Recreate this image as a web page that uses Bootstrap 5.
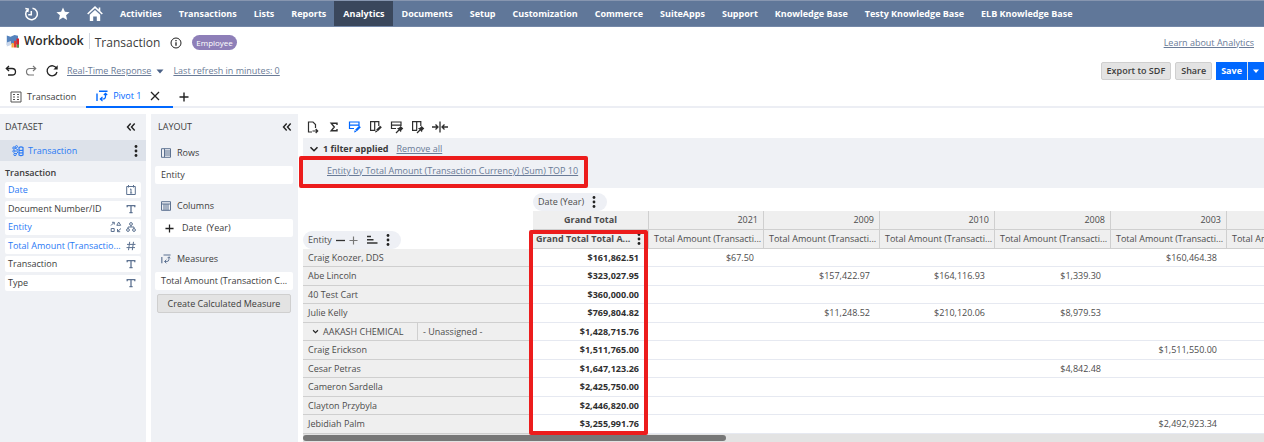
<!DOCTYPE html>
<html lang="en">
<head>
<meta charset="utf-8">
<meta name="viewport" content="width=device-width, initial-scale=1">
<title>Workbook - Transaction</title>
<link rel="stylesheet" href="https://cdn.jsdelivr.net/npm/bootstrap@5.3.0/dist/css/bootstrap.min.css">
<style>
  :root { --ink:#3c3c3c; --slate:#607799; --panel:#eff1f5; --link:#6a7b97; --azure:#2a7af5; --blue:#0068ff; --mark:#ec1c1c; }
  body { font-family:"Open Sans","Noto Sans",sans-serif; font-size:9px; line-height:14px; color:var(--ink); overflow:hidden; height:100vh; }
  svg { flex:none; display:block; fill:none; stroke:currentColor; }
  svg.solid { stroke:none; }
  svg.dark { color:#222; }
  button { border:0; background:none; padding:0; color:inherit; font:inherit; }
  a { color:var(--link); }
  .i9 { width:9px; height:9px; } .i10 { width:10px; height:10px; } .i12 { width:12px; height:12px; } .i14 { width:14px; height:14px; }
  .i16 { width:16px; height:16px; }

  .topnav { background:var(--slate); height:27px; border-top:1px solid #8796b0; border-bottom:1px solid #7488a8; padding-left:15px; }
  .topnav a { color:#fff; font-weight:700; text-decoration:none; padding:1px 8px 0 9px; display:flex; align-items:center; white-space:nowrap; }
  .topnav a.icon-item { width:32px; padding:1px 0 0; justify-content:center; }
  .topnav a.active { background:#3a475c; }

  .titlebar { height:31px; padding:0 10px 0 6px; }
  .brand { font-size:12px; font-weight:600; color:#2b2b2b; border-right:1px solid #d5d9e2; padding-right:5px; margin:0 5px 4px 0; height:16px; }
  .doc-title { font-size:12px; font-weight:400; margin:0 10px 0 0; line-height:16px; }
  .role { background:#8e7fb8; color:#fff; font-size:8px; border-radius:8px; padding:0 4px; line-height:15px; height:15px; margin-left:10px; }
  .actions { height:26px; padding-left:5px; }
  .tool-btn { font-weight:600; height:18px; border:1px solid #cfcfcf; border-radius:2px; background:#e3e3e3; padding:0 5px; }
  .save-btn { background:var(--blue); color:#fff; border:0; border-radius:0; font-weight:700; }
  .tabs { height:24px; border-bottom:2px solid #eceef4; padding-left:10px; }
  .tab { height:24px; gap:5px; padding-top:2px; }
  .tab.active { color:var(--blue); border-bottom:2px solid var(--blue); padding:2px 13px 0 10px; margin:0 6px 0 10px; }

  .workarea { padding-top:6px; gap:5px; min-height:0; }
  .side { width:146px; background:var(--panel); flex:none; }
  .side-head { height:26px; padding:0 10px 0 5px; }
  .side-head.wide { padding:0 5px 0 7px; }
  .side-head h2 { font-size:9px; font-weight:400; margin:0; line-height:14px; }
  .source { height:21px; background:#dde2ea; color:var(--azure); padding:0 8px 0 12px; }
  .group-name { font-size:9px; font-weight:600; height:21px; padding:5px 5px 0; margin:0; line-height:14px; }
  .fields { padding:0 5px; margin:0; list-style:none; }
  .field { background:#fff; border-radius:2px; height:16px; margin-bottom:3px; padding:0 5px 0 3px; }
  .field:nth-child(even) { margin-bottom:2px; }
  .field.used { color:var(--azure); }
  .field svg, .zone-name svg { color:#5d7291; }
  .zone-name { height:26px; padding:0 6px; gap:6px; font-size:9px; margin:0; font-weight:400; }
  .zone-box { background:#fff; border-radius:2px; height:18px; padding:0 6px; margin-bottom:9px; white-space:nowrap; }
  .calc { margin:0 2px; height:19px; border:1px solid #cfcfcf; border-radius:2px; background:#e3e3e3; }

  .pivot { border-left:1px solid #eff1f5; padding-left:5px; margin-left:-5px; }
  .pivot-tools { height:24px; gap:7px; padding:2px 0 0 3px; color:#2e2e2e; }
  .pivot-tools .on { color:var(--blue); }
  .filters { background:var(--panel); height:50px; padding:0 6px; margin-bottom:5px; }
  .filter-line { height:22px; }
  .filter-item { padding-left:18px; height:22px; display:flex; align-items:center; }
  .ring { position:absolute; border:4px solid var(--mark); border-radius:2px; pointer-events:none; z-index:2; }
  .ring-filter { left:-4px; top:18px; width:289px; height:32px; }
  .ring-total { left:-4px; top:0; width:119px; height:205px; }

  .grid-wrap { overflow:hidden; margin-left:-4px; padding-left:4px; }
  .pivot-table { table-layout:fixed; width:1040px; border-collapse:separate; border-spacing:0; color:#4c4c4c; }
  .pivot-table th, .pivot-table td { padding:0; font-weight:400; overflow:hidden; white-space:nowrap; }
  .pivot-table thead .plain { height:18px; vertical-align:bottom; }
  .pivot-table .head { background:#efefef; border-right:1px solid #cfcfcf; border-bottom:1px solid #cfcfcf; height:19px; padding:0 5px; }
  .pivot-table .head.total { font-weight:700; padding:0 3px; overflow:visible; position:relative; }
  .pivot-table tbody tr { height:19px; }
  .pivot-table tbody tr:nth-child(odd) { height:18px; }
  .pivot-table tbody th { background:#efefef; border-bottom:1px solid #cfcfcf; padding-left:5px; }
  .pivot-table tbody th.parent { border-right:1px solid #cfcfcf; }
  .pivot-table tbody td { border-bottom:1px solid #e6e9f1; text-align:right; padding-right:10px; }
  .pivot-table tbody td:first-of-type { font-weight:700; color:#2f2f2f; }
  .chip { background:#eef0f5; border-radius:9px; height:18px; padding:0 11px 0 5px; display:inline-flex; align-items:center; vertical-align:bottom; }
  .track { background:#e3e3e3; padding-top:1px; height:9px; }
  .thumb { background:#777; height:6px; border-radius:3px; width:44%; }
</style>
</head>
<body class="d-flex flex-column">

<svg width="0" height="0" class="position-absolute" aria-hidden="true">
  <symbol id="dots" viewBox="0 0 4 14"><g fill="#222" stroke="none"><circle cx="2" cy="2.500" r="1.400"/><circle cx="2" cy="7" r="1.400"/><circle cx="2" cy="11.500" r="1.400"/></g></symbol>
  <symbol id="collapse" viewBox="0 0 10 10"><path d="M4.700 1.500 1.500 5l3.200 3.500M8.700 1.500 5.500 5l3.200 3.500" stroke="#222" stroke-width="1.400"/></symbol>
  <symbol id="chev" viewBox="0 0 10 10"><path d="M1.500 3.200 5 6.700l3.500-3.500" stroke="#222" stroke-width="1.600"/></symbol>
  <symbol id="txt" viewBox="0 0 10 10"><path d="M1.200 3.200V1.700h7.600v1.500M5 1.700v6.800M3.400 8.600h3.200" stroke-width="1.300"/></symbol>
  <symbol id="measure" viewBox="0 0 12 12"><path d="M1 3.500V11M3 1.200h8.500" stroke-width="1.400"/><path d="M9.500 3.500v3q0 2.500-2.500 2.500H4.500M6.500 6.800 4.300 9l2.200 2.200M7.800 5l1.700-1.700L11.200 5" stroke-width="1.200"/></symbol>
  <symbol id="plus" viewBox="0 0 10 10"><path d="M5 .5v9M.5 5h9" stroke-width="1.400"/></symbol>
  <symbol id="rowpane" viewBox="0 0 14 14"><path d="M11 6V2H1.500v6.500H6M1.500 5.200H11" stroke-width="1.200"/></symbol>
  <symbol id="colpane" viewBox="0 0 14 14"><path d="M9.800 6V1.600H1.600v8.800H6M5.700 1.600v8.800" stroke-width="1.200"/></symbol>
  <symbol id="pencil" viewBox="0 0 14 14"><path d="m8 10.500 4-4" stroke-width="2.400"/><path d="m6 12.500.8-2.600 1.800 1.800z" fill="currentColor" stroke="none"/></symbol>
  <symbol id="pin" viewBox="0 0 14 14"><path d="m6 13 3-3" stroke-width="1.200"/><path d="m7 8.200 2-.4 1.600-1.900 2.700 2.700-1.900 1.600-.4 2z" fill="currentColor" stroke="none"/></symbol>
</svg>

<nav class="topnav d-flex flex-shrink-0" aria-label="Main">
  <a href="#" class="icon-item" aria-label="Recent"><svg class="i14" viewBox="0 0 14 14"><path d="M4 2.300A5.800 5.800 0 1 0 8.500 1.200M1.300 1.500l2.900.6-.5 2.900M7.300 4v3.700H4.200" stroke-width="1.500"/></svg></a>
  <a href="#" class="icon-item" aria-label="Shortcuts"><svg class="i14 solid" viewBox="0 0 14 14"><path d="m7 .4 1.900 4.300 4.700.5-3.500 3.100 1 4.700L7 10.600 2.900 13l1-4.700L.4 5.200l4.700-.5z" fill="#fff"/></svg></a>
  <a href="#" class="icon-item" aria-label="Home"><svg class="i16" viewBox="0 0 16 16"><path d="M.7 8 8 1.200 15.300 8M12.500 1.500v3.500" stroke-width="1.600"/><path d="M2.800 8.800 8 4l5.200 4.800V15H9.800v-4.500H6.200V15H2.800z" fill="#fff" stroke="none"/></svg></a>
  <a href="#">Activities</a><a href="#">Transactions</a><a href="#">Lists</a><a href="#">Reports</a><a href="#" class="active" aria-current="page">Analytics</a><a href="#">Documents</a><a href="#">Setup</a><a href="#">Customization</a><a href="#">Commerce</a><a href="#">SuiteApps</a><a href="#">Support</a><a href="#">Knowledge Base</a><a href="#">Testy Knowledge Base</a><a href="#">ELB Knowledge Base</a>
</nav>

<header class="titlebar d-flex align-items-center flex-shrink-0">
  <span class="brand d-flex align-items-center gap-1"><svg class="i14 solid" viewBox="0 0 14 14"><path d="m.8 1.500 3.700 1.200L8.500 1 12 1.800V10l-4 .5-3.500-1L.8 11z" fill="#5583bd"/><path d="M.8 8.500 5 7v4L.8 12.500z" fill="#c9d6ea"/><path d="M5.500 9h2.300v4.500H5.500z" fill="#f4a83d"/><path d="M8 6.800h2.300v6.700H8z" fill="#e23b35"/><path d="M10.500 4.500H13v9h-2.500z" fill="#d8232a"/><path d="M10.800 10.500H13v3h-2.200z" fill="#49a04b"/></svg>Workbook</span>
  <h1 class="doc-title">Transaction</h1>
  <svg class="i12 dark" viewBox="0 0 12 12"><circle cx="6" cy="6" r="5"/><path d="M6 5.200v3.500M6 3v1.300" stroke-width="1.300"/></svg>
  <span class="role">Employee</span>
  <a href="#" class="ms-auto">Learn about Analytics</a>
</header>

<div class="actions d-flex align-items-center flex-shrink-0">
  <button aria-label="Undo"><svg class="i12 dark" viewBox="0 0 12 12"><path d="M4 1 1.300 3.500 4 6M1.300 3.500H7q3.500 0 3.500 3.300T7 10H3" stroke-width="1.300"/></svg></button>
  <button aria-label="Redo" class="ms-2"><svg class="i12" viewBox="0 0 12 12"><path d="m8 1 2.700 2.500L8 6M10.700 3.500H5Q1.500 3.500 1.500 6.800T5 10h4" stroke-width="1.200" stroke="#777"/></svg></button>
  <button aria-label="Refresh" class="mx-2"><svg class="i14 dark" viewBox="0 0 14 14"><path d="M11.600 4.500A5 5 0 1 0 12 8" stroke-width="1.300"/><path d="M12.700 1.200v4.300H8.400z" fill="#222" stroke="none"/></svg></button>
  <a href="#">Real-Time Response</a>
  <svg class="i10 solid ms-1" viewBox="0 0 10 10"><path d="M1.500 3.500h7L5 7.500z" fill="#4a6186"/></svg>
  <a href="#" class="ms-2">Last refresh in minutes: 0</a>
  <div class="ms-auto d-flex gap-1">
    <button class="tool-btn">Export to SDF</button>
    <button class="tool-btn">Share</button>
    <div class="d-flex"><button class="tool-btn save-btn">Save</button><button class="tool-btn save-btn border-start" aria-label="More save options"><svg class="solid" width="6" height="5" viewBox="0 0 6 5"><path d="M0 .5h6L3 4z" fill="#fff"/></svg></button></div>
  </div>
</div>

<div class="tabs d-flex align-items-start flex-shrink-0">
  <button class="tab d-flex align-items-center"><svg class="i12" viewBox="0 0 12 12"><path d="M1 1h10v10H1zM3 3.500h2M7 3.500h2M3 6h2M7 6h2M3 8.500h2M7 8.500h2" stroke="#555"/></svg>Transaction</button>
  <div class="tab active d-flex align-items-center"><svg class="i12"><use href="#measure"/></svg><button>Pivot 1</button><button class="ms-1" aria-label="Close tab"><svg class="i10 dark" viewBox="0 0 10 10"><path d="m1 1 8 8M9 1 1 9" stroke-width="1.300"/></svg></button></div>
  <button class="tab d-flex align-items-center" aria-label="Add tab"><svg class="i10 dark"><use href="#plus"/></svg></button>
</div>

<div class="workarea d-flex flex-fill">
  <aside class="side">
    <div class="side-head d-flex align-items-center justify-content-between"><h2>DATASET</h2><button aria-label="Collapse dataset"><svg class="i10"><use href="#collapse"/></svg></button></div>
    <div class="source d-flex align-items-center"><svg class="i12 me-1" viewBox="0 0 12 12"><circle cx="2" cy="3" r="1.200"/><circle cx="1.800" cy="6.200" r="1"/><circle cx="3" cy="9.500" r="1.200"/><circle cx="4.500" cy="1.600" r="1"/><path d="M3 6h3M3 3l3 2M4 9l2-2"/><path d="M7 2.500q2-1.200 4 0V10q-2 1.200-4 0zM7 5q2 1 4 0M7 7.500q2 1 4 0" stroke-width="1.200"/></svg><span>Transaction</span><button class="ms-auto" aria-label="Dataset menu"><svg width="4" height="14"><use href="#dots"/></svg></button></div>
    <h3 class="group-name">Transaction</h3>
    <ul class="fields">
      <li class="field used d-flex align-items-center"><span class="me-auto">Date</span><svg class="i10" viewBox="0 0 10 10"><path d="M.7 1.500h8.600v8H.7zM2.500 0v2.500M7.500 0v2.500M4 4.500l1-.6v4M4 8h2.200"/></svg></li>
      <li class="field d-flex align-items-center"><span class="me-auto">Document Number/ID</span><svg class="i10"><use href="#txt"/></svg></li>
      <li class="field used d-flex align-items-center"><span class="me-auto">Entity</span><svg class="i12 me-1" viewBox="0 0 12 12"><path d="M1 4.500 4 1.500M2 1.300h2.300v2.300M6.800 4.300 8.700 1l2 3.300zM1.200 7.500h3v3h-3zM11 7.500l-3.500 3M7.500 8v2.700h2.700"/></svg><svg class="i10" viewBox="0 0 10 10"><circle cx="5" cy="2" r="1.400"/><circle cx="2" cy="8" r="1.400"/><circle cx="8" cy="8" r="1.400"/><path d="M5 3.400V5M2 6.600V5h6v1.600"/></svg></li>
      <li class="field used d-flex align-items-center"><span class="me-auto">Total Amount (Transactio...</span><svg class="i10" viewBox="0 0 10 10"><path d="M3.700.8 2.500 9.200M7.500.8 6.300 9.200M1 3.400h8.500M.5 6.600H9"/></svg></li>
      <li class="field d-flex align-items-center"><span class="me-auto">Transaction</span><svg class="i10"><use href="#txt"/></svg></li>
      <li class="field d-flex align-items-center"><span class="me-auto">Type</span><svg class="i10"><use href="#txt"/></svg></li>
    </ul>
  </aside>

  <aside class="side">
    <div class="side-head wide d-flex align-items-center justify-content-between"><h2>LAYOUT</h2><button aria-label="Collapse layout"><svg class="i10"><use href="#collapse"/></svg></button></div>
    <div class="px-1">
      <h3 class="zone-name d-flex align-items-center"><svg class="i10" viewBox="0 0 10 10"><path d="M.5.700h9v8.600h-9zM3.500.700v8.600M3.500 3h6M3.500 5h6M3.500 7h6"/></svg>Rows</h3>
      <div class="zone-box d-flex align-items-center">Entity</div>
      <h3 class="zone-name d-flex align-items-center"><svg class="i10" viewBox="0 0 10 10"><path d="M.5.700h9v8.600h-9zM.5 3h9M3 3v6.300M5 3v6.300M7 3v6.300"/></svg>Columns</h3>
      <div class="zone-box d-flex align-items-center"><button class="mx-1" aria-label="Expand"><svg class="i9 dark"><use href="#plus"/></svg></button><span class="ms-1">Date&nbsp; (Year)</span></div>
      <h3 class="zone-name d-flex align-items-center"><svg class="i10"><use href="#measure"/></svg>Measures</h3>
      <div class="zone-box d-flex align-items-center mb-1">Total Amount (Transaction C...</div>
      <div class="d-grid"><button class="calc">Create Calculated Measure</button></div>
    </div>
  </aside>

  <main class="pivot flex-fill overflow-hidden">
    <div class="pivot-tools d-flex align-items-center">
      <button aria-label="Export"><svg class="i14" viewBox="0 0 14 14"><path d="M6 12H2.500V2H7l2.500 2.500V8M6.500 11h5M9.700 9l2 2-2 2" stroke-width="1.200"/></svg></button>
      <button aria-label="Totals"><svg class="i14" viewBox="0 0 14 14"><path d="M10 5V3.300H4.200L7.300 7l-3.100 3.700H10V9" stroke-width="1.400"/></svg></button>
      <button aria-label="Edit rows" class="on"><svg class="i14"><use href="#rowpane"/><use href="#pencil"/></svg></button>
      <button aria-label="Edit columns"><svg class="i14"><use href="#colpane"/><use href="#pencil"/></svg></button>
      <button aria-label="Pin rows"><svg class="i14"><use href="#rowpane"/><use href="#pin"/></svg></button>
      <button aria-label="Pin columns"><svg class="i14"><use href="#colpane"/><use href="#pin"/></svg></button>
      <button aria-label="Fit columns"><svg class="i16" viewBox="0 0 16 16"><path d="M8 2.500v11M0 8h5.500M3.500 5.500 6 8l-2.500 2.500M16 8h-5.500M12.500 5.500 10 8l2.500 2.500" stroke-width="1.300"/></svg></button>
    </div>

    <section class="filters position-relative" aria-label="Filters">
      <div class="filter-line d-flex align-items-center"><button aria-label="Toggle filters"><svg class="i10"><use href="#chev"/></svg></button><b class="ms-1 me-2">1 filter applied</b><a href="#">Remove all</a></div>
      <div class="filter-item"><a href="#">Entity by Total Amount (Transaction Currency) (Sum) TOP 10</a></div>
      <span class="ring ring-filter"></span>
    </section>

    <div class="grid-wrap">
      <table class="pivot-table">
        <colgroup><col style="width:115px"><col style="width:115px"><col style="width:116px"><col style="width:115px"><col style="width:116px"><col style="width:115px"><col style="width:116px"><col style="width:116px"><col style="width:116px"></colgroup>
        <thead>
          <tr><th class="plain" colspan="2" rowspan="3"><span class="chip">Entity<svg class="i9 ms-1" viewBox="0 0 9 9"><path d="M0 4.500h9" stroke="#333" stroke-width="1.300"/></svg><svg class="i9 ms-1" viewBox="0 0 10 10"><path d="M5 .5v9M.5 5h9" stroke="#777" stroke-width="1.300"/></svg><svg class="mx-2" width="12" height="10" viewBox="0 0 12 10"><path d="M1 1.500h4M1 4.700h6.500M1 8h10.500" stroke="#333" stroke-width="1.400"/></svg><svg width="4" height="14"><use href="#dots"/></svg></span></th>
            <th class="plain" colspan="7"><span class="chip">Date (Year)<svg class="ms-2" width="4" height="14"><use href="#dots"/></svg></span></th></tr>
          <tr><th class="head total text-center">Grand Total</th><th class="head text-end">2021</th><th class="head text-end">2009</th><th class="head text-end">2010</th><th class="head text-end">2008</th><th class="head text-end">2003</th><th class="head"></th></tr>
          <tr><th class="head total"><div class="d-flex align-items-center justify-content-between">Grand Total Total A...<svg width="4" height="14" class="me-1"><use href="#dots"/></svg></div><span class="ring ring-total"></span></th><th class="head">Total Amount (Transacti...</th><th class="head">Total Amount (Transacti...</th><th class="head">Total Amount (Transacti...</th><th class="head">Total Amount (Transacti...</th><th class="head">Total Amount (Transacti...</th><th class="head">Total Amount (Transacti...</th></tr>
        </thead>
        <tbody>
          <tr><th colspan="2">Craig Koozer, DDS</th><td>$161,862.51</td><td>$67.50</td><td></td><td></td><td></td><td>$160,464.38</td><td></td></tr>
          <tr><th colspan="2">Abe Lincoln</th><td>$323,027.95</td><td></td><td>$157,422.97</td><td>$164,116.93</td><td>$1,339.30</td><td></td><td></td></tr>
          <tr><th colspan="2">40 Test Cart</th><td>$360,000.00</td><td></td><td></td><td></td><td></td><td></td><td></td></tr>
          <tr><th colspan="2">Julie Kelly</th><td>$769,804.82</td><td></td><td>$11,248.52</td><td>$210,120.06</td><td>$8,979.53</td><td></td><td></td></tr>
          <tr><th class="parent"><span class="d-flex align-items-center ps-1"><svg class="me-1" width="7" height="7"><use href="#chev"/></svg>AAKASH CHEMICAL</span></th><th>- Unassigned -</th><td>$1,428,715.76</td><td></td><td></td><td></td><td></td><td></td><td></td></tr>
          <tr><th colspan="2">Craig Erickson</th><td>$1,511,765.00</td><td></td><td></td><td></td><td></td><td>$1,511,550.00</td><td></td></tr>
          <tr><th colspan="2">Cesar Petras</th><td>$1,647,123.26</td><td></td><td></td><td></td><td>$4,842.48</td><td></td><td></td></tr>
          <tr><th colspan="2">Cameron Sardella</th><td>$2,425,750.00</td><td></td><td></td><td></td><td></td><td></td><td></td></tr>
          <tr><th colspan="2">Clayton Przybyla</th><td>$2,446,820.00</td><td></td><td></td><td></td><td></td><td></td><td></td></tr>
          <tr><th colspan="2">Jebidiah Palm</th><td>$3,255,991.76</td><td></td><td></td><td></td><td></td><td>$2,492,923.34</td><td></td></tr>
        </tbody>
      </table>
      <div class="track"><div class="thumb"></div></div>
    </div>
  </main>
</div>
<script src="https://cdn.jsdelivr.net/npm/bootstrap@5.3.0/dist/js/bootstrap.bundle.min.js"></script>
</body>
</html>
